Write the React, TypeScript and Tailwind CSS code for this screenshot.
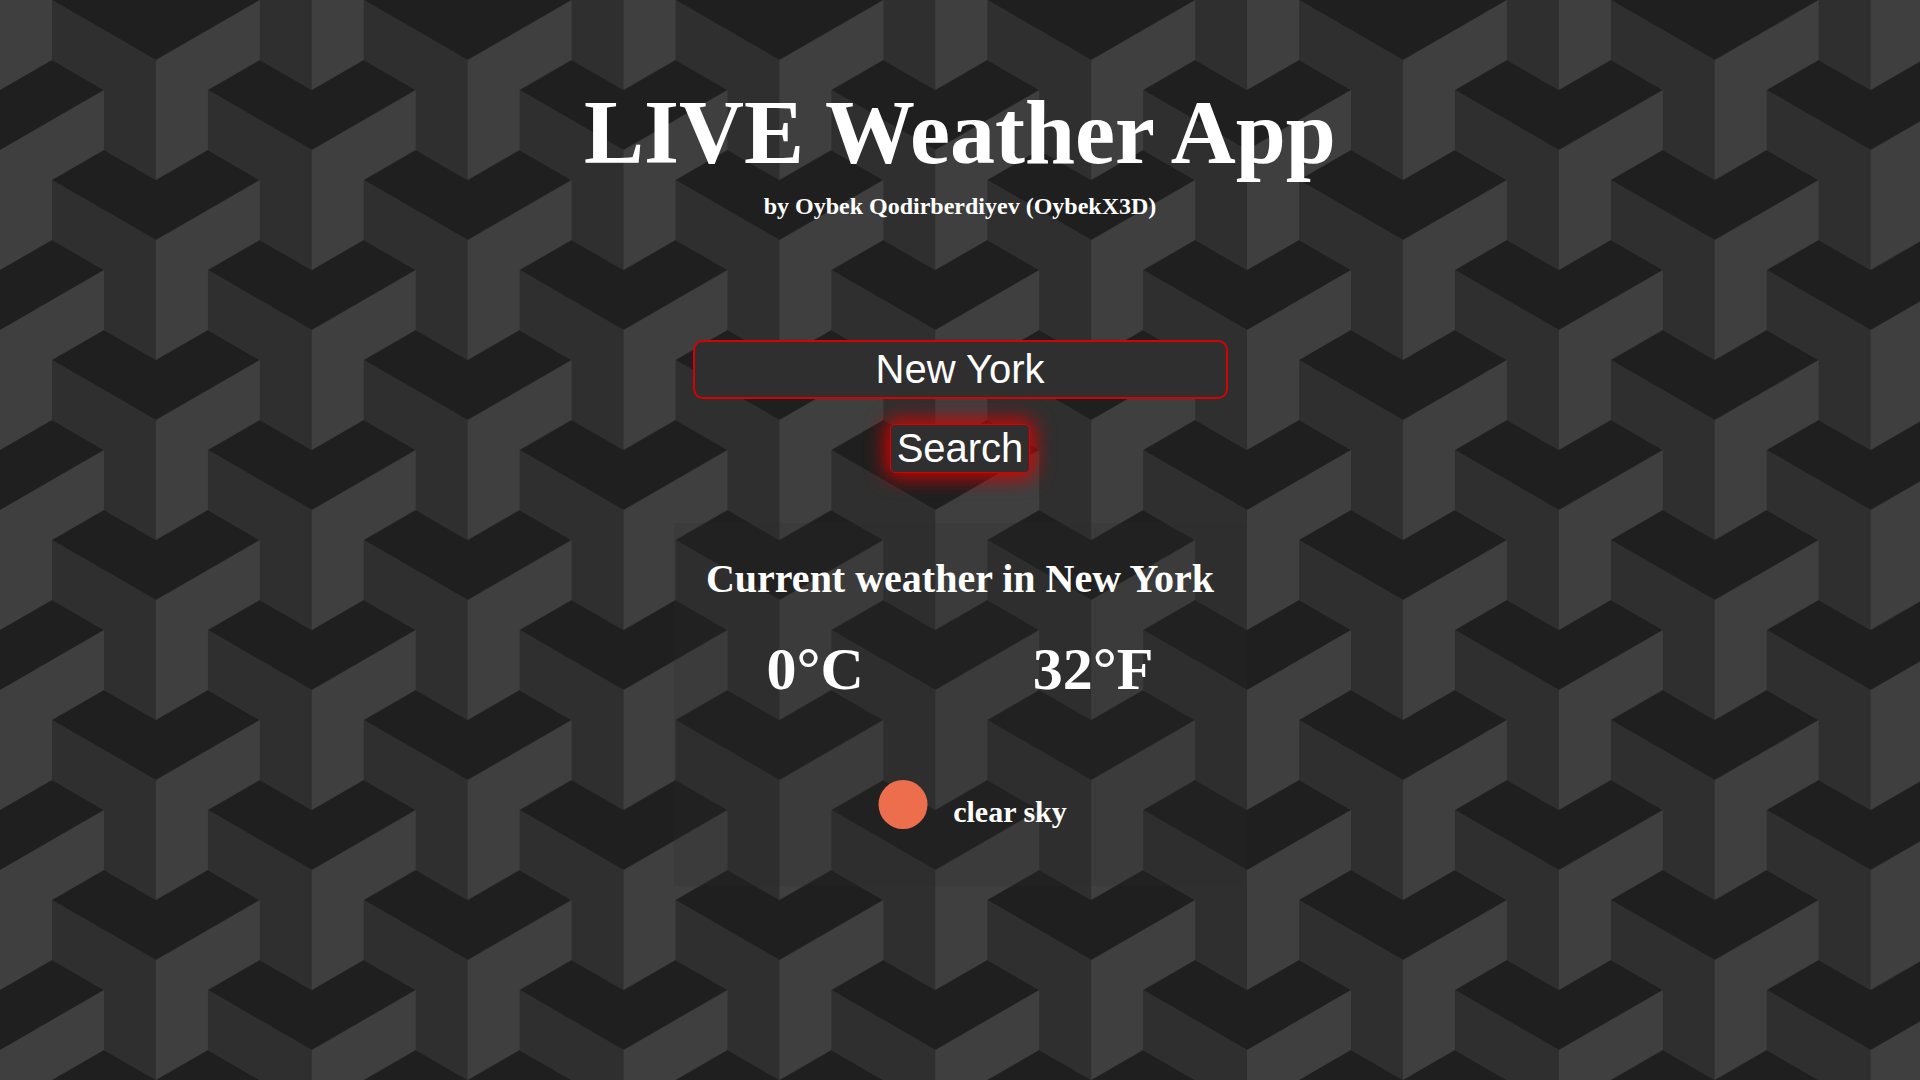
import { useState } from "react";

const TILE_WIDTH = 311.77;
const TILE_HEIGHT = 180;

/* One block of the backdrop: dark chevron top and its shaded left face. */
function Block({ x, y }: { x: number; y: number }) {
  return (
    <g transform={`translate(${x} ${y})`}>
      <path d="M-103.92 0 L0 60 V180 L-51.96 150 V90 L-103.92 60 Z" fill="#2f2f2f" />
      <path d="M0 0 L51.96 -30 L103.92 0 L0 60 L-103.92 0 L-51.96 -30 Z" fill="#1f1f1f" />
    </g>
  );
}

function Backdrop() {
  return (
    <svg className="absolute inset-0 -z-10 h-full w-full" aria-hidden="true">
      <defs>
        <pattern id="blocks" width={TILE_WIDTH} height={TILE_HEIGHT} patternUnits="userSpaceOnUse">
          <rect width={TILE_WIDTH} height={TILE_HEIGHT} fill="#3f3f3f" />
          <Block x={155.885} y={-180} />
          <Block x={155.885} y={0} />
          <Block x={155.885} y={180} />
          <Block x={0} y={-90} />
          <Block x={0} y={90} />
          <Block x={TILE_WIDTH} y={-90} />
          <Block x={TILE_WIDTH} y={90} />
        </pattern>
      </defs>
      <rect width="100%" height="100%" fill="url(#blocks)" />
    </svg>
  );
}

export default function App() {
  const [city, setCity] = useState("New York");

  return (
    <div className="relative isolate flex min-h-screen flex-col items-center overflow-hidden px-4 pt-20 pb-16 text-center font-['Liberation_Serif',serif] font-bold text-white">
      <Backdrop />
      <header>
        <h1 className="text-[90px] leading-[106px]">LIVE Weather App</h1>
        <p className="mt-1.5 text-2xl leading-7">by Oybek Qodirberdiyev (OybekX3D)</p>
      </header>

      <form
        className="mt-30 flex w-full flex-col items-center gap-[25px] font-['Liberation_Sans',sans-serif] text-[40px] leading-[46px] font-normal"
        onSubmit={(event) => event.preventDefault()}
      >
        <input
          type="text"
          aria-label="City"
          value={city}
          onChange={(event) => setCity(event.target.value)}
          className="h-[59px] w-full max-w-[535px] rounded-[10px] border-2 border-[#d90000] bg-[#2f2f2f] text-center outline-none"
        />
        <button
          type="submit"
          className="rounded-[5px] border border-[#d90000] bg-[#2f2f2f] px-1.5 leading-[47px] shadow-[0_0_20px_4px_#d90000]"
        >
          Search
        </button>
      </form>

      <section className="mt-[50px] w-full max-w-[572px] bg-[#2f2f2f]/20 px-2 py-8">
        <h2 className="text-[40px] leading-[48px]">Current weather in New York</h2>
        <div className="mt-8 flex justify-around text-[60px] leading-[68px]">
          <p>0°C</p>
          <p>32°F</p>
        </div>
        <div className="mt-[51px] flex items-center justify-center">
          <svg className="size-[100px]" viewBox="0 0 100 100" role="img" aria-label="Clear sky">
            <circle cx="50" cy="50.5" r="24.5" fill="#ec6e4c" />
          </svg>
          <p className="mt-4 text-[30px] leading-[34px]">clear sky</p>
        </div>
      </section>
    </div>
  );
}
